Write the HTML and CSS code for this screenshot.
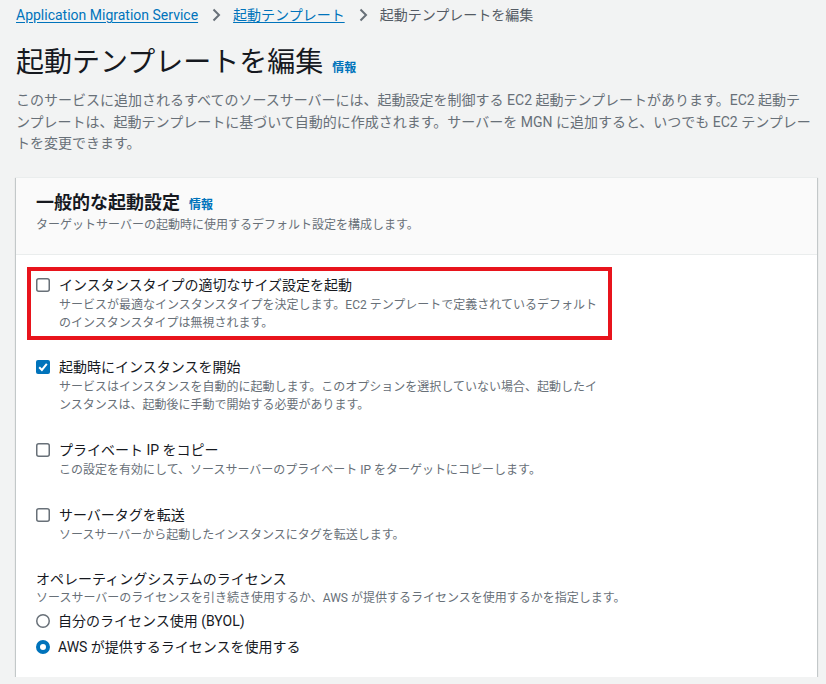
FILE: index.html
```html
<!DOCTYPE html>
<html lang="ja">
<head>
<meta charset="utf-8">
<title>起動テンプレートを編集</title>
<link rel="stylesheet" href="styles.css">
</head>
<body>
<div class="page">
  <nav class="breadcrumbs">
    <a class="crumb-link" href="#">Application Migration Service</a>
    <svg class="chev" width="16" height="16" viewBox="0 0 16 16"><path d="M5.5 2.5 11 8l-5.5 5.5" fill="none" stroke="#687078" stroke-width="2"/></svg>
    <a class="crumb-link" href="#">起動テンプレート</a>
    <svg class="chev" width="16" height="16" viewBox="0 0 16 16"><path d="M5.5 2.5 11 8l-5.5 5.5" fill="none" stroke="#687078" stroke-width="2"/></svg>
    <span class="crumb-current">起動テンプレートを編集</span>
  </nav>

  <header class="page-header">
    <div class="title-row">
      <h1 class="page-title">起動テンプレートを編集</h1>
      <a class="info-link" href="#">情報</a>
    </div>
    <p class="page-desc">このサービスに追加されるすべてのソースサーバーには、起動設定を制御する EC2 起動テンプレートがあります。EC2 起動テンプレートは、起動テンプレートに基づいて自動的に作成されます。サーバーを MGN に追加すると、いつでも EC2 テンプレートを変更できます。</p>
  </header>

  <section class="card">
    <div class="card-header">
      <div class="title-row">
        <h2 class="card-title">一般的な起動設定</h2>
        <a class="info-link" href="#">情報</a>
      </div>
      <p class="card-desc">ターゲットサーバーの起動時に使用するデフォルト設定を構成します。</p>
    </div>
    <div class="card-body">
      <div class="highlight">
        <div class="check-item">
          <span class="box"><svg width="14" height="14" viewBox="0 0 14 14"><rect x="0.75" y="0.75" width="12.5" height="12.5" rx="2" fill="#fff" stroke="#687078" stroke-width="1.5"/></svg></span>
          <div class="check-text">
            <div class="check-label">インスタンスタイプの適切なサイズ設定を起動</div>
            <div class="check-desc">サービスが最適なインスタンスタイプを決定します。EC2 テンプレートで定義されているデフォルトのインスタンスタイプは無視されます。</div>
          </div>
        </div>
      </div>

      <div class="check-item">
        <span class="box"><svg width="14" height="14" viewBox="0 0 14 14"><rect x="0" y="0" width="14" height="14" rx="2" fill="#0073bb"/><path d="M3.2 7.2 5.9 9.9 10.8 3.9" fill="none" stroke="#fff" stroke-width="2"/></svg></span>
        <div class="check-text">
          <div class="check-label">起動時にインスタンスを開始</div>
          <div class="check-desc">サービスはインスタンスを自動的に起動します。このオプションを選択していない場合、起動したインスタンスは、起動後に手動で開始する必要があります。</div>
        </div>
      </div>

      <div class="check-item">
        <span class="box"><svg width="14" height="14" viewBox="0 0 14 14"><rect x="0.75" y="0.75" width="12.5" height="12.5" rx="2" fill="#fff" stroke="#687078" stroke-width="1.5"/></svg></span>
        <div class="check-text">
          <div class="check-label">プライベート IP をコピー</div>
          <div class="check-desc">この設定を有効にして、ソースサーバーのプライベート IP をターゲットにコピーします。</div>
        </div>
      </div>

      <div class="check-item">
        <span class="box"><svg width="14" height="14" viewBox="0 0 14 14"><rect x="0.75" y="0.75" width="12.5" height="12.5" rx="2" fill="#fff" stroke="#687078" stroke-width="1.5"/></svg></span>
        <div class="check-text">
          <div class="check-label">サーバータグを転送</div>
          <div class="check-desc">ソースサーバーから起動したインスタンスにタグを転送します。</div>
        </div>
      </div>

      <div class="radio-field">
        <div class="field-label">オペレーティングシステムのライセンス</div>
        <div class="field-desc">ソースサーバーのライセンスを引き続き使用するか、AWS が提供するライセンスを使用するかを指定します。</div>
        <div class="radio-group">
          <div class="radio-item">
            <svg class="radio" width="14" height="14" viewBox="0 0 14 14"><circle cx="7" cy="7" r="6.25" fill="#fff" stroke="#687078" stroke-width="1.5"/></svg>
            <span class="radio-label">自分のライセンス使用 (BYOL)</span>
          </div>
          <div class="radio-item">
            <svg class="radio" width="14" height="14" viewBox="0 0 14 14"><circle cx="7" cy="7" r="5" fill="#fff" stroke="#0073bb" stroke-width="4"/></svg>
            <span class="radio-label">AWS が提供するライセンスを使用する</span>
          </div>
        </div>
      </div>
    </div>
  </section>
</div>
</body>
</html>
```

FILE: styles.css
```css
* { box-sizing: border-box; }

body {
  margin: 0;
  background: #f2f3f3;
  color: #16191f;
  font-family: Roboto, "Noto Sans CJK JP", sans-serif;
  font-size: 14px;
  line-height: 22px;
}

.page {
  padding: 0 9px 0 16px;
}

.breadcrumbs {
  display: flex;
  align-items: center;
  height: 30px;
}

.crumb-link {
  color: #0073bb;
  text-decoration: underline;
  text-underline-offset: 2px;
}

.chev {
  margin: 0 9px 0 10px;
}

.crumb-current {
  color: #545b64;
}

.page-header {
  padding-top: 15px;
}

.title-row {
  display: flex;
  align-items: baseline;
  gap: 9px;
}

.page-title {
  margin: 0;
  font-size: 28px;
  line-height: 36px;
  font-weight: 400;
  color: #16191f;
}

.info-link {
  color: #0073bb;
  font-size: 12px;
  font-weight: 700;
  text-decoration: none;
}

.page-desc {
  margin: 0;
  padding-top: 9px;
  max-width: 796px;
  color: #687078;
  font-size: 14px;
  line-height: 21.5px;
}

.card {
  margin-top: 22px;
  background: #fff;
  border-top: 1px solid #eaeded;
  box-shadow: 0 1px 1px 0 rgba(0, 28, 36, 0.3), 1px 1px 1px 0 rgba(0, 28, 36, 0.15), -1px 1px 1px 0 rgba(0, 28, 36, 0.15);
}

.card-header {
  background: #fafafa;
  border-bottom: 1px solid #eaeded;
  padding: 14px 20px 20px;
}

.card-title {
  margin: 0;
  font-size: 18px;
  line-height: 22px;
  font-weight: 700;
}

.card-desc {
  margin: 0;
  padding-top: 0;
  color: #687078;
  font-size: 12px;
  line-height: 18px;
}

.card-body {
  padding: 12px 20px 19px;
  display: flex;
  flex-direction: column;
  gap: 25px;
}

.highlight {
  border: 4px solid #e8141c;
  margin: 0 0 -9px -9px;
  width: 585px;
  padding: 3px 5px 4px;
}

.check-item {
  display: flex;
  gap: 9px;
  width: 566px;
}

.box {
  flex: none;
  display: flex;
  padding-top: 4px;
}

.check-label {
  font-size: 14px;
  line-height: 22px;
}

.check-desc {
  color: #687078;
  font-size: 12px;
  line-height: 18px;
}

.field-label {
  font-size: 14px;
  line-height: 20px;
}

.field-desc {
  color: #687078;
  font-size: 12px;
  line-height: 18px;
}

.radio-group {
  display: flex;
  flex-direction: column;
  gap: 4px;
  padding-top: 3px;
}

.radio-item {
  display: flex;
  align-items: center;
  gap: 8px;
  height: 22px;
}

.radio {
  flex: none;
}
```
